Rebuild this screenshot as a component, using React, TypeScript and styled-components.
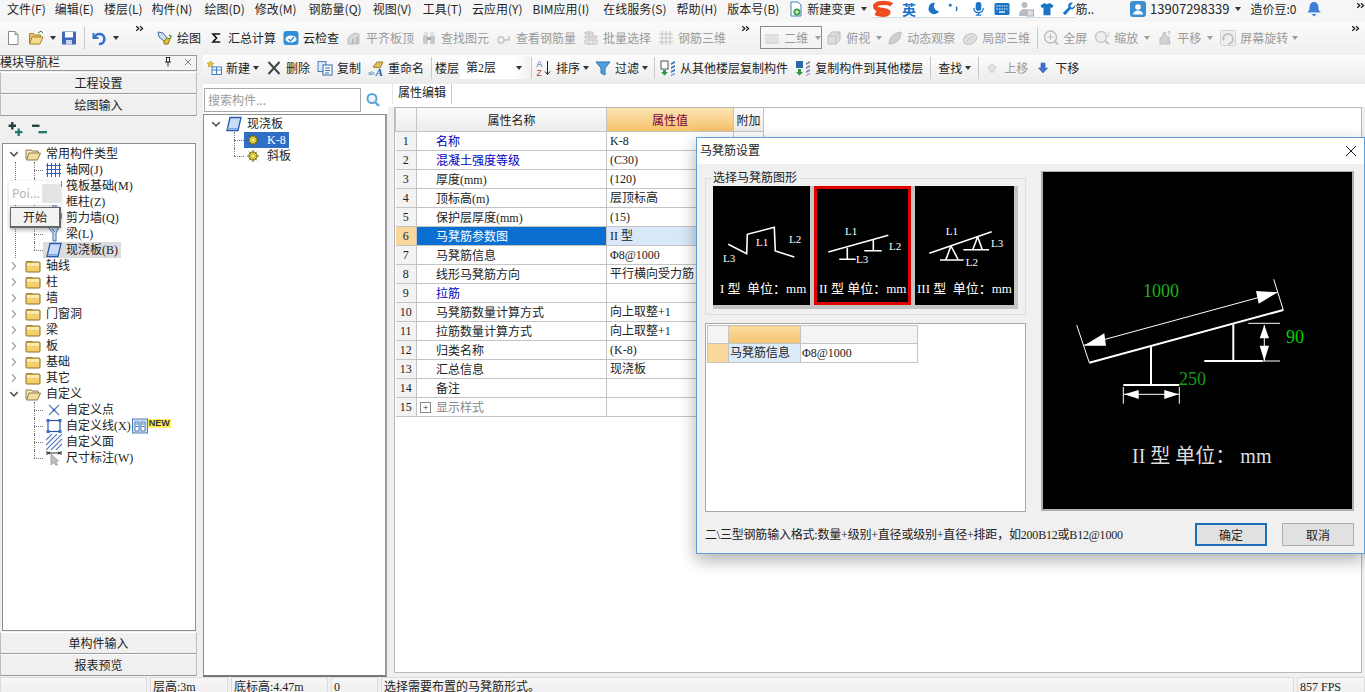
import React from "react";
import styled, { createGlobalStyle } from "styled-components";

const UI = `"Noto Sans CJK SC", "Noto Sans", sans-serif`;
const SONG = `"Liberation Serif", "Noto Sans CJK SC", serif`;

const Global = createGlobalStyle`
  html, body { margin: 0; padding: 0; width: 1365px; height: 692px; overflow: hidden; background: #f0f0f0; }
  #root { width: 1365px; height: 692px; }
  * { box-sizing: border-box; }
`;

const icons: Record<string, React.ReactNode> = {
  doc: <><path d="M3.5 1.5h6.5l3 3v10H3.5z" fill="#fff" stroke="#8a8a8a" /><path d="M10 1.5v3h3" fill="#ddd" stroke="#8a8a8a" /></>,
  open: <><path d="M1.5 13V3.5h4l1 1.5h6v2" fill="#e9c66a" stroke="#a5812c" /><path d="M4 7h11l-3 7H1.5z" fill="#f6dc8c" stroke="#a5812c" /><path d="M10 3l3-2 2 2" fill="none" stroke="#3a7a3a" /></>,
  save: <><rect x="1" y="1.5" width="14" height="13" rx="1" fill="#3f67b8" /><rect x="4" y="2" width="8" height="5.5" fill="#fff" /><rect x="5" y="10" width="6" height="4.5" fill="#c8d4ee" /></>,
  undo: <><path d="M2.5 3v5h5" fill="none" stroke="#2f6fd0" strokeWidth="2" /><path d="M3.5 8A5 5 0 1 1 8 14" fill="none" stroke="#2f6fd0" strokeWidth="2.6" /></>,
  paint: <><path d="M2 2l5 1 4 5-3 3-5-4z" fill="#cfe0f4" stroke="#4b6d96" /><path d="M8 11l3-3 3 1-2 5-4 0z" fill="#e7c031" stroke="#8b7b1e" /><path d="M13 5l2 1-1 3" fill="none" stroke="#55a04a" strokeWidth="1.4" /></>,
  sigma: <path d="M11.5 4.500V4H5l3.500 4L5 12h6.500v-.5" fill="none" stroke="#111" strokeWidth="1.600" />,
  cloud: <><rect x="0.5" y="1" width="15" height="14" rx="3" fill="#2e8fd8" /><ellipse cx="8" cy="9" rx="5.5" ry="3.6" fill="#fff" /><path d="M5.5 9l2 2 3.5-4" fill="none" stroke="#2e8fd8" strokeWidth="1.4" /></>,
  alignOff: <><path d="M2 14V8l6-5 5 1v10z" fill="#d8d8d8" stroke="#bcbcbc" /><path d="M6 14V9h2v5M10 14V7h2v7" fill="#bbb" /></>,
  binoOff: <><rect x="2" y="5" width="5" height="9" rx="1.5" fill="#c9c9c9" /><rect x="9" y="5" width="5" height="9" rx="1.5" fill="#c9c9c9" /><rect x="3.5" y="2" width="3" height="4" fill="#ddd" /><rect x="9.5" y="2" width="3" height="4" fill="#ddd" /><rect x="6" y="7" width="4" height="3" fill="#aaa" /></>,
  rebarOff: <><circle cx="5" cy="10" r="3" fill="none" stroke="#c4c4c4" strokeWidth="1.5" /><path d="M8 10h5V6" fill="none" stroke="#c4c4c4" strokeWidth="1.5" /></>,
  batchOff: <><path d="M2 2h8v2H2zM2 6h12v2H2zM2 10h12v4H2z" fill="#e8e8e8" stroke="#c2c2c2" /><path d="M6 1v14M10 4v10" stroke="#c2c2c2" strokeDasharray="1.5 1" /></>,
  gridOff: <path d="M1 4h14M1 8h14M1 12h14M4 1v14M8 1v14M12 1v14" stroke="#c4c4c4" fill="none" />,
  planeOff: <><rect x="1" y="4" width="14" height="10" fill="#dcdcdc" /><path d="M1 7h14M1 10h14" stroke="#ececec" /></>,
  cubeOff: <><path d="M2 6l4-4h8v8l-4 4H2z" fill="#dedede" stroke="#bdbdbd" /><path d="M2 6h8v8M10 6l4-4" fill="none" stroke="#bdbdbd" /></>,
  leafOff: <path d="M2 14c0-7 5-11 12-12 0 7-4 12-12 12z" fill="#cfcfcf" stroke="#bdbdbd" />,
  local3dOff: <><ellipse cx="8" cy="9" rx="7" ry="5" fill="#e0e0e0" stroke="#c2c2c2" transform="rotate(-25 8 9)" /><path d="M5 11l6-5" stroke="#bdbdbd" /></>,
  fullOff: <><circle cx="7.5" cy="7" r="6" fill="#f2f2f2" stroke="#bdbdbd" strokeWidth="1.4" /><path d="M7.5 4v6M4.5 7h6" stroke="#bdbdbd" /><path d="M12 11.5l3 3" stroke="#bdbdbd" strokeWidth="2" /></>,
  zoomOff: <><circle cx="7" cy="7" r="5.5" fill="#ededed" stroke="#c8c8c8" strokeWidth="1.4" /><path d="M11 11l4 3" stroke="#c4c4c4" strokeWidth="2" /><path d="M13 3h3M13 6h3" stroke="#ccc" /></>,
  panOff: <><path d="M3 14V8l3-1V3l2-1 1 4 3 1 1 7z" fill="#d2d2d2" stroke="#bdbdbd" /><path d="M12 1v4M10.5 2.5L12 1l1.5 1.5" fill="none" stroke="#c4c4c4" /></>,
  rotateOff: <><rect x="0.5" y="0.5" width="15" height="15" rx="1" fill="#efefef" stroke="#d2d2d2" /><path d="M3 9a5 5 0 1 1 5 5" fill="none" stroke="#c2c2c2" strokeWidth="2" /><path d="M1.5 8h4L3 11z" fill="#c2c2c2" /></>,
  add: <><path d="M4.5 1l1 2 2.2.2-1.6 1.5.5 2.3-2.1-1.2L2.4 7l.5-2.3L1.3 3.2 3.5 3z" fill="#f2c72f" stroke="#a8851a" strokeWidth=".6" /><rect x="6" y="7" width="9.5" height="7.5" fill="#fff" stroke="#3f7fc4" /><path d="M6 10h9.5M10.5 7v7.5" stroke="#3f7fc4" /></>,
  del: <path d="M2.5 2l11 12M13.5 2l-11 12" stroke="#444" strokeWidth="2" />,
  copy: <><rect x="1" y="1.5" width="8" height="10" fill="#dbe7f6" stroke="#4f7fb8" /><rect x="6" y="5" width="9" height="10" fill="#fff" stroke="#2f66a8" /><path d="M8 8h5M8 10.5h5M8 13h4" stroke="#2f66a8" /></>,
  rename: <><path d="M5 7l4-5h6l-3 6z" fill="#e1bd63" stroke="#9d8131" /><text x="0" y="15" fontSize="7" fontFamily="Liberation Serif" fill="#2c5f94">ab</text><text x="7.5" y="15.5" fontSize="11" fontWeight="700" fontStyle="italic" fontFamily="Liberation Serif" fill="#2b5fa8">A</text></>,
  sort: <><text x="0.5" y="7" fontSize="8.5" fontFamily="Liberation Sans" fill="#3e68b3">A</text><text x="0.5" y="15.5" fontSize="8.5" fontFamily="Liberation Sans" fill="#b23a3a">Z</text><path d="M11.5 1v13M9 11.5l2.5 3 2.5-3" fill="none" stroke="#222" /></>,
  filter: <path d="M1 2h14l-5 6v7l-4-2V8z" fill="#4da3e0" stroke="#2b72b0" />,
  fromFloor: <><rect x="1" y="1" width="7" height="8" fill="#fff" stroke="#555" /><path d="M3 10v2H1l3.500 3.500L8 12H6v-2z" fill="#2e9a3e" /><path d="M11 3l4-2v2l-4 2zM11 7l4-2v2l-4 2zM11 11l4-2v2l-4 2zM11 15l4-2v1l-4 2z" fill="#3f74b8" /></>,
  toFloor: <><rect x="1" y="1" width="7" height="7" fill="#2f66a8" /><path d="M3 9v3H1l3.500 3.500L8 12H6V9z" fill="#2e9a3e" /><path d="M11 3l4-2v2l-4 2zM11 7l4-2v2l-4 2zM11 11l4-2v2l-4 2zM11 15l4-2v1l-4 2z" fill="#7a8aa0" /></>,
  upOff: <path d="M8 3.500l4.500 4.500H10v4H6V8H3.500z" fill="#e2e2e2" stroke="#cfcfcf" />,
  down: <path d="M6 3h4v5h2.500L8 13 3.500 8H6z" fill="#3f6fd0" stroke="#2f58a8" strokeWidth=".6" />,
  fileNew: <><path d="M3 1h7l3 3v11H3z" fill="#fff" stroke="#3d7fc4" /><circle cx="9" cy="11" r="3.500" fill="#3fa03f" /><path d="M9 9v4M7 11h4" stroke="#fff" /></>,
  folder: <><path d="M1 4V3h6l1 1z" fill="#b8923a" /><rect x="1" y="4" width="14" height="10" rx="1" fill="#f3cf6e" stroke="#8b6f22" /><rect x="2" y="5" width="12" height="3" fill="#fbeab0" /></>,
  folderOpen: <><path d="M1 13V4h5l1 1h6v2" fill="#f6ebcb" stroke="#8b7a44" /><path d="M4 7h11.500l-3 7H1.500z" fill="#f4dc9c" stroke="#8b7a44" /></>,
  grid: <path d="M1.500 1v14M5.500 1v14M9.500 1v14M13.500 1v14M0 3.500h15M0 7.500h15M0 11.500h15" stroke="#2f5fc0" fill="none" />,
  raft: <><path d="M0 4h16v4H0z" fill="#c9d9f2" stroke="#2d5fb8" /><path d="M2 8v3M6 8v3M10 8v3M14 8v3" stroke="#2d5fb8" /></>,
  beam: <><path d="M2 1h11l-3 6v8H7V7z" fill="#cfe0f4" stroke="#3f6fb0" /><path d="M6 3l3 3" stroke="#3f6fb0" /></>,
  slab: <><path d="M4 1.500h11l-3 13H1z" fill="#c8dcf6" stroke="#2558ac" strokeWidth="1.300" /><path d="M1.500 12.500l10.500 0" stroke="#7ea6de" /></>,
  gear: <><circle cx="8" cy="8" r="4.800" fill="#f0d53c" stroke="#5d5a14" /><path d="M8 1v14M1 8h14M3 3l10 10M13 3L3 13" stroke="#5d5a14" strokeDasharray="1.500 1" /><circle cx="8" cy="8" r="2" fill="#fbeb7a" /></>,
  point: <><path d="M3 3l10 10M13 3L3 13" stroke="#5a83c0" strokeWidth="1.200" /><circle cx="8" cy="8" r="1.300" fill="#2f5fb0" /></>,
  lineBox: <><rect x="2" y="2.500" width="12" height="11" fill="none" stroke="#2558ac" strokeWidth="1.200" /><path d="M.5 1h3v3h-3zM12.500 1h3v3h-3zM.5 12h3v3h-3zM12.500 12h3v3h-3z" fill="#3c6fc4" /></>,
  hatch: <path d="M0 6L6 0M0 11L11 0M0 16L16 0M5 16L16 5M10 16l6-6" stroke="#4f78b8" strokeWidth="1.100" fill="none" />,
  dim: <><path d="M1 1v4M15 1v4M1 3h14" stroke="#333" /><path d="M1 3l3-1.500v3zM15 3l-3-1.500v3z" fill="#333" /><path d="M5 4v11l3-2.500 2 3 1.500-1-2-3 3-.5z" fill="#c0c0c0" stroke="#8a8a8a" strokeWidth=".7" /></>,
  book: <><rect x=".5" y="1" width="15" height="14" fill="#cfe0f4" stroke="#4f7fb8" /><path d="M3 4h4v9H3zM9 4h4v9H9z" fill="#fff" stroke="#4f7fb8" /><path d="M3.500 6h3M9.500 6h3M3.500 8.500h3M9.500 8.500h3" stroke="#4f7fb8" /></>,
  search: <><circle cx="7" cy="6.500" r="4.500" fill="#eaf4fb" stroke="#5ba6d8" strokeWidth="2" /><path d="M10.500 10.500L14 14" stroke="#5ba6d8" strokeWidth="2.400" /></>,
  plusTree: <><path d="M5 1v7M1.500 4.500h7" stroke="#1c3d3d" strokeWidth="2.200" /><path d="M11 7v7M7.500 10.500h7" stroke="#1f7a6a" strokeWidth="2.200" /></>,
  minusTree: <><path d="M1 4.500h7" stroke="#1c3d3d" strokeWidth="2.200" /><path d="M7 10.500h8" stroke="#1f7a6a" strokeWidth="2.200" /></>,
  chevRight: <path d="M5.500 3l4.500 5-4.500 5" fill="none" stroke="#a8a8a8" strokeWidth="1.800" />,
  chevDown: <path d="M3 5.500l5 5 5-5" fill="none" stroke="#555" strokeWidth="1.900" />,
  more: <path d="M3 3l3.500 3L3 9M8 3l3.500 3L8 9" fill="none" stroke="#111" strokeWidth="1.500" />,
  avatar: <><rect x="0" y="0" width="16" height="16" rx="3" fill="#3f8fd0" /><circle cx="8" cy="6" r="2.800" fill="#fff" /><path d="M3 13.500c.5-3 2.500-4 5-4s4.500 1 5 4z" fill="#fff" /></>,
  bell: <><path d="M8 1c3 0 4.500 2.500 4.500 6 0 2 1 3.500 2.500 4.500H1C2.500 10.500 3.500 9 3.500 7 3.500 3.500 5 1 8 1z" fill="#3e7fd8" /><path d="M5.500 13h5L8 15.500z" fill="#3e7fd8" /></>,
  moon: <path d="M10 1a7 7 0 1 0 5 10.500A6.500 6.500 0 0 1 10 1z" fill="#1a74c8" />,
  dots: <><circle cx="4" cy="4" r="1.800" fill="#1a74c8" /><path d="M11 6c1.500 1 1.500 3 0 5" fill="none" stroke="#1a74c8" strokeWidth="1.800" /></>,
  mic: <><rect x="5" y="1" width="6" height="9.500" rx="3" fill="#1a74c8" /><path d="M3 7.500c0 3 2 5 5 5s5-2 5-5M8 12.500V15M5 15h6" fill="none" stroke="#1a74c8" strokeWidth="1.300" /></>,
  keyboard: <><rect x=".5" y="2" width="15" height="12" rx="1.500" fill="#1a74c8" /><path d="M2.500 5h11M2.500 8h11" stroke="#fff" strokeDasharray="1.500 1" /><path d="M5 11h6" stroke="#fff" strokeWidth="1.300" /></>,
  person: <><circle cx="6.500" cy="4" r="3" fill="#b8bcc0" /><path d="M1 15c0-5 2-7 5.500-7S12 10 12 15z" fill="#b8bcc0" /><rect x="9" y="9" width="6.500" height="6" fill="#dde0e3" stroke="#a8acb0" /></>,
  shirt: <path d="M5 1l3 1.500L11 1l4.500 3-2 3-1.500-1v9H4V6L2.500 7l-2-3z" fill="#1a74c8" />,
  wrench: <path d="M15 3.500l-3 3-2-.5-.5-2 3-3c-2.500-1-5.500.5-5.500 3.500 0 .8.100 1.200.3 1.800L1 12.500 3.500 15l6.200-6.800c3 1 6-1.500 5.300-4.700z" fill="#1a74c8" />,
  pin: <path d="M5 2h6M6 2v6M10 2v6M4 8h8M8 8v6" stroke="#222" strokeWidth="1.300" fill="none" />,
  close: <path d="M3 3l10 10M13 3L3 13" stroke="#333" />,
};

const Svg = styled.svg<{ $ml?: number }>`
  flex: none;
  display: block;
  margin-left: ${(p) => p.$ml ?? 0}px;
`;

const Icon = ({ n, s = 16, ml }: { n: string; s?: number; ml?: number }) => (
  <Svg viewBox="0 0 16 16" width={s} height={s} $ml={ml}>{icons[n]}</Svg>
);

const Page = styled.div`
  position: relative;
  width: 1365px;
  height: 692px;
  overflow: hidden;
  display: flex;
  flex-direction: column;
  background: #f0f0f0;
  font: 12px/16px ${UI};
  color: #222;
`;

/* Menu */
const MenuBar = styled.div`
  height: 22px;
  flex: none;
  display: flex;
  align-items: flex-start;
  padding: 1px 0 0 7px;
  background: #f6f6f6;
`;
const MenuItem = styled.span<{ $ml?: number; $fs?: number }>`
  margin-left: ${(p) => p.$ml ?? 0}px;
  font-size: ${(p) => p.$fs ?? 12}px;
  white-space: nowrap;
  flex: none;
  color: #262626;
`;
const Caret = styled.i<{ $ml?: number; $off?: boolean }>`
  flex: none;
  display: block;
  width: 0;
  height: 0;
  margin-left: ${(p) => p.$ml ?? 6}px;
  border-left: 3px solid transparent;
  border-right: 3px solid transparent;
  border-top: 4px solid ${(p) => (p.$off ? "#9c9c9c" : "#333")};
`;
const MenuCaret = styled(Caret)`
  margin-top: 6px;
`;
const MenuIcon = styled.span<{ $ml?: number }>`
  flex: none;
  margin-left: ${(p) => p.$ml ?? 0}px;
`;

/* Sogou bar lies over the menu */
const Sogou = styled.div`
  position: absolute;
  left: 871px;
  top: 0;
  width: 205px;
  height: 18px;
  background: #fff;
  border-bottom: 1px solid #cfdde8;
  display: flex;
  align-items: center;
  color: #1a74c8;
`;
const SogouGlyph = styled.span`
  margin-left: 6px;
  font-size: 14px;
  font-weight: 700;
`;
const SogouIcons = styled.div`
  display: flex;
  align-items: center;
  gap: 7px;
  margin-left: 9px;
`;

/* Toolbars */
const MainBar = styled.div`
  height: 33px;
  flex: none;
  display: flex;
  align-items: center;
  padding: 2px 0 4px 5px;
  background: linear-gradient(#fbfbfb, #efefef);
`;
const Tool = styled.div<{ $ml?: number; $off?: boolean; $gap?: number }>`
  flex: none;
  display: flex;
  align-items: center;
  gap: ${(p) => p.$gap ?? 4}px;
  margin-left: ${(p) => p.$ml ?? 7}px;
  color: ${(p) => (p.$off ? "#9a9a9a" : "#222")};
  white-space: nowrap;
`;
const Sep = styled.i<{ $ml?: number }>`
  flex: none;
  display: block;
  width: 1px;
  height: 22px;
  margin-left: ${(p) => p.$ml ?? 7}px;
  background: #c8c8c8;
`;
const More = styled.div<{ $ml?: number }>`
  flex: none;
  width: 12px;
  margin-left: ${(p) => p.$ml ?? 14}px;
  align-self: flex-start;
`;
const ViewCombo = styled.div`
  flex: none;
  margin-left: 8px;
  width: 62px;
  height: 23px;
  border: 1px solid #8c8c8c;
  display: flex;
  align-items: center;
  gap: 4px;
  padding-left: 3px;
  color: #9a9a9a;
`;

const Body = styled.div`
  flex: 1;
  display: flex;
  min-height: 0;
`;

/* Left nav */
const Nav = styled.div`
  width: 197px;
  flex: none;
  display: flex;
  flex-direction: column;
`;
const NavHead = styled.div`
  height: 16px;
  flex: none;
  display: flex;
  align-items: center;
  padding: 0 3px 2px 0;
  border: 1px solid #9a9a9a;
  border-left: 0;
  margin-bottom: 1px;
  line-height: 14px;
  background: #f4f4f4;
`;
const NavHeadTitle = styled.span`
  flex: 1;
`;
const NavBtn = styled.div`
  height: 22px;
  flex: none;
  text-align: center;
  line-height: 22px;
  background: #f0f0f0;
  border: 1px solid #bdbdbd;
  border-top-color: #fff;
  border-bottom-color: #9c9c9c;
  font-family: ${SONG};
`;
const TreeTools = styled.div`
  height: 27px;
  flex: none;
  display: flex;
  align-items: center;
  gap: 7px;
  padding-left: 7px;
`;
const TreeBox = styled.div`
  height: 488px;
  flex: none;
  margin: 0 1px 1px 2px;
  padding-top: 2px;
  background: #fff;
  border: 1px solid #8e8e8e;
  font-family: ${SONG};
  overflow: hidden;
`;
const Row = styled.div<{ $pl: number }>`
  position: relative;
  height: 16px;
  display: flex;
  align-items: center;
  padding-left: ${(p) => p.$pl}px;
  white-space: nowrap;
`;
const Chevron = styled.span`
  flex: none;
  width: 10px;
  height: 16px;
  display: flex;
  align-items: center;
  justify-content: center;
`;
const RootLabel = styled.span`
  margin-left: 5px;
`;
const Children = styled.div<{ $trunk?: boolean }>`
  position: relative;
  &::before {
    content: "";
    display: ${(p) => (p.$trunk ? "block" : "none")};
    position: absolute;
    left: 12px;
    top: 0;
    bottom: 0;
    border-left: 1px dotted #777;
  }
`;
const Child = styled.div<{ $sel?: boolean }>`
  position: relative;
  height: 16px;
  display: flex;
  align-items: center;
  padding-left: 40px;
  white-space: nowrap;
  &::before {
    content: "";
    position: absolute;
    left: 31px;
    top: 8px;
    width: 9px;
    border-top: 1px dotted #777;
  }
  &::after {
    content: "";
    position: absolute;
    left: 31px;
    top: 0;
    height: 16px;
    border-left: 1px dotted #777;
  }
  &:last-child::after {
    height: 8px;
  }
`;
const ChildInner = styled.span<{ $sel?: boolean }>`
  display: flex;
  align-items: center;
  gap: 4px;
  height: 16px;
  padding: 0 3px;
  background: ${(p) => (p.$sel ? "#dcdcdc" : "transparent")};
`;
const NewBadge = styled.span`
  margin: -6px 0 0 -4px;
  padding: 0 1px;
  background: #fdec5c;
  color: #333;
  font: 700 9px/9px "Liberation Sans", sans-serif;
`;

/* Overlay popup */
const Popup = styled.div`
  position: absolute;
  left: 9px;
  top: 181px;
  width: 52px;
  height: 24px;
  background: rgba(255, 255, 255, 0.92);
  box-shadow: 0 1px 4px rgba(0, 0, 0, 0.18);
  display: flex;
  align-items: center;
  padding-left: 3px;
  color: #b4b4b4;
`;
const PopupBox = styled.i`
  display: block;
  width: 19px;
  height: 19px;
  margin-left: auto;
  background: #e4e4e4;
`;
const PopupBtn = styled.div`
  position: absolute;
  left: 10px;
  top: 207px;
  width: 51px;
  height: 21px;
  background: #f2f2f2;
  border: 1px solid #666;
  border-right-width: 2px;
  border-bottom-width: 2px;
  box-shadow: 0 2px 4px rgba(0, 0, 0, 0.3);
  text-align: center;
  line-height: 17px;
`;

/* Right column */
const Work = styled.div`
  flex: 1;
  min-width: 0;
  display: flex;
  flex-direction: column;
  padding-left: 6px;
`;
const SubBar = styled.div`
  height: 29px;
  flex: none;
  display: flex;
  align-items: center;
  padding: 0 0 4px 3px;
  background: linear-gradient(#fdfdfd, #ebebeb);
`;
const FloorCombo = styled.div`
  flex: none;
  margin-left: 1px;
  width: 70px;
  height: 23px;
  display: flex;
  align-items: center;
  padding-left: 6px;
  background: linear-gradient(90deg, #fff 80%, #f0f0f0);
  font-family: ${SONG};
`;
const FloorCaret = styled(Caret)`
  margin-left: auto;
  margin-right: 8px;
`;
const Split = styled.div`
  flex: 1;
  display: flex;
  min-height: 0;
`;
const Middle = styled.div`
  width: 185px;
  flex: none;
  display: flex;
  flex-direction: column;
  background: #f0f0f0;
`;
const SearchRow = styled.div`
  height: 30px;
  flex: none;
  display: flex;
  align-items: center;
  padding: 4px 0 2px 1px;
  background: #fff;
`;
const SearchInput = styled.div`
  width: 157px;
  height: 24px;
  padding-left: 3px;
  border: 1px solid #a8a8a8;
  line-height: 21px;
  color: #999;
`;
const SearchBtn = styled.div`
  margin-left: 4px;
`;
const MidTree = styled.div`
  height: 563px;
  flex: none;
  width: 184px;
  padding-top: 1px;
  background: #fff;
  border: 1px solid #8e8e8e;
  border-right: 2px solid #9a9a9a;
  border-bottom: 2px solid #777;
  font-family: ${SONG};
`;
const MidChild = styled.div`
  position: relative;
  height: 16px;
  display: flex;
  align-items: center;
  padding-left: 40px;
  &::before {
    content: "";
    position: absolute;
    left: 30px;
    top: 8px;
    width: 10px;
    border-top: 1px dotted #777;
  }
  &::after {
    content: "";
    position: absolute;
    left: 30px;
    top: 0;
    height: 16px;
    border-left: 1px dotted #777;
  }
  &:last-child::after {
    height: 8px;
  }
`;
const MidChildInner = styled.span<{ $sel?: boolean }>`
  display: flex;
  align-items: center;
  gap: 7px;
  width: 45px;
  height: 16px;
  padding-left: 2px;
  white-space: nowrap;
  background: ${(p) => (p.$sel ? "#2f6dc8" : "transparent")};
  color: ${(p) => (p.$sel ? "#fff" : "#222")};
`;

const Props = styled.div`
  flex: 1;
  min-width: 0;
  display: flex;
  flex-direction: column;
`;
const Tabs = styled.div`
  height: 23px;
  flex: none;
  background: #fff;
  padding-left: 4px;
`;
const Tab = styled.div`
  width: 60px;
  height: 20px;
  border-right: 1px solid #c8c8c8;
  border-left: 1px solid #e4e4e4;
  text-align: center;
  line-height: 18px;
  font-family: ${SONG};
`;
const PropsPanel = styled.div`
  height: 566px;
  flex: none;
  margin: 0 3px 0 6px;
  background: #fff;
  border: 1px solid #b8b8b8;
  overflow: hidden;
`;
const PTable = styled.table`
  width: 368px;
  table-layout: fixed;
  border-collapse: collapse;
  font-family: ${SONG};
`;
const HeadCell = styled.th<{ $hot?: boolean }>`
  height: 23px;
  padding: 3px 0 0;
  font-weight: 400;
  line-height: 14px;
  border: 1px solid #c4c4c4;
  border-top: 0;
  color: ${(p) => (p.$hot ? "#800040" : "#222")};
  background: ${(p) =>
    p.$hot ? "linear-gradient(#fbe3b3, #f5c169)" : "linear-gradient(#fbfbfb, #ececec)"};
`;
const NumCell = styled.td<{ $hot?: boolean }>`
  height: 19px;
  padding: 0;
  line-height: 14px;
  text-align: center;
  border: 1px solid #c4c4c4;
  border-left: 0;
  background: ${(p) => (p.$hot ? "#fad79d" : "#f3f3f3")};
`;
const NameCell = styled.td<{ $blue?: boolean; $sel?: boolean; $off?: boolean }>`
  height: 19px;
  padding: 2px 0 0 19px;
  line-height: 14px;
  border: 1px solid #c4c4c4;
  white-space: nowrap;
  background: ${(p) => (p.$sel ? "#0a6fd0" : "#fff")};
  color: ${(p) => (p.$sel ? "#fff" : p.$blue ? "#0000c0" : p.$off ? "#888" : "#222")};
`;
const NameWrap = styled.span`
  display: flex;
  align-items: center;
  gap: 5px;
  margin-left: -16px;
`;
const PlusBox = styled.i`
  display: flex;
  align-items: center;
  justify-content: center;
  width: 11px;
  height: 11px;
  border: 1px solid #888;
  font-style: normal;
  font-size: 10px;
  line-height: 9px;
  color: #333;
`;
const ValCell = styled.td<{ $sel?: boolean }>`
  height: 19px;
  padding: 0 0 0 3px;
  line-height: 14px;
  border: 1px solid #c4c4c4;
  white-space: nowrap;
  overflow: hidden;
  background: ${(p) => (p.$sel ? "#d8e8f8" : "#fff")};
`;
const ExtraCell = styled.td`
  height: 19px;
  padding: 0;
  border: 1px solid #c4c4c4;
`;

/* Status bar */
const Status = styled.div`
  height: 15px;
  flex: none;
  display: flex;
  gap: 3px;
  font-family: ${SONG};
  background: #f0f0f0;
  overflow: hidden;
`;
const StatusCell = styled.div<{ $w?: number }>`
  ${(p) => (p.$w ? `width: ${p.$w}px; flex: none;` : "flex: 1;")}
  height: 20px;
  padding: 1px 0 0 2px;
  background: linear-gradient(#f6f6f6, #efefef);
  border: 1px solid #dcdcdc;
  white-space: nowrap;
`;

/* Dialog */
const Dialog = styled.div`
  position: absolute;
  left: 696px;
  top: 137px;
  width: 669px;
  height: 417px;
  display: flex;
  flex-direction: column;
  background: #f0f0f0;
  border: 1px solid #5e9fd6;
  box-shadow: 0 6px 16px rgba(0, 0, 0, 0.32);
  font-family: ${SONG};
`;
const DialogTitle = styled.div`
  height: 26px;
  flex: none;
  display: flex;
  align-items: center;
  justify-content: space-between;
  padding: 0 7px 0 3px;
  background: #fff;
`;
const DialogBody = styled.div`
  flex: 1;
  min-height: 0;
  display: flex;
  gap: 15px;
  padding: 7px 10px 0 8px;
`;
const LeftCol = styled.div`
  width: 321px;
  flex: none;
  display: flex;
  flex-direction: column;
  gap: 8px;
  padding-top: 7px;
`;
const Group = styled.div`
  position: relative;
  height: 137px;
  flex: none;
  padding: 7px 0 0 7px;
  border: 1px solid #dcdcdc;
`;
const Legend = styled.span`
  position: absolute;
  left: 7px;
  top: -9px;
  padding-right: 3px;
  background: #f0f0f0;
`;
const Strip = styled.div`
  width: 305px;
  height: 123px;
  display: flex;
  gap: 4px;
  background: #c4c4c4;
`;
const Thumb = styled.div<{ $w: number; $sel?: boolean }>`
  flex: none;
  width: ${(p) => p.$w}px;
  height: 119px;
  background: #000;
  outline: ${(p) => (p.$sel ? "3px solid #e00000" : "none")};
  outline-offset: -3px;
`;
const ThumbSvg = styled.svg`
  display: block;
  width: 100%;
  height: 100%;
`;
const InfoBox = styled.div`
  height: 189px;
  flex: none;
  padding: 1px;
  background: #fff;
  border: 1px solid #a8a8a8;
`;
const ITable = styled.table`
  width: 210px;
  table-layout: fixed;
  border-collapse: collapse;
`;
const ICell = styled.td<{ $bg: string; $h: number }>`
  height: ${(p) => p.$h}px;
  padding: 0 0 0 1px;
  background: ${(p) => p.$bg};
  border: 1px solid #c4c4c4;
  white-space: nowrap;
`;
const BigPic = styled.div`
  width: 313px;
  height: 340px;
  flex: none;
  background: #000;
  border: 2px solid #b0b0b0;
  border-top-width: 1px;
`;
const Foot = styled.div`
  height: 23px;
  flex: none;
  margin: 0 10px 7px 8px;
  display: flex;
  align-items: center;
`;
const FootNote = styled.span`
  flex: 1;
  white-space: nowrap;
  letter-spacing: -0.2px;
`;
const DlgBtn = styled.div<{ $primary?: boolean }>`
  width: 72px;
  height: 23px;
  margin-left: ${(p) => (p.$primary ? 0 : 15)}px;
  text-align: center;
  line-height: ${(p) => (p.$primary ? 19 : 21)}px;
  background: #e1e1e1;
  border: ${(p) => (p.$primary ? "2px solid #1c6fb8" : "1px solid #adadad")};
  font-family: ${UI};
`;

const Tx = ({ x, y, s = 11, f = "#fff", children }: { x: number; y: number; s?: number; f?: string; children: React.ReactNode }) => (
  <text x={x} y={y} fontSize={s} fill={f} fontFamily={SONG}>{children}</text>
);

const rows: [string, string, ("blue" | "sel" | "off")?][] = [
  ["名称", "K-8", "blue"],
  ["混凝土强度等级", "(C30)", "blue"],
  ["厚度(mm)", "(120)"],
  ["顶标高(m)", "层顶标高"],
  ["保护层厚度(mm)", "(15)"],
  ["马凳筋参数图", "II 型", "sel"],
  ["马凳筋信息", "Φ8@1000"],
  ["线形马凳筋方向", "平行横向受力筋"],
  ["拉筋", "", "blue"],
  ["马凳筋数量计算方式", "向上取整+1"],
  ["拉筋数量计算方式", "向上取整+1"],
  ["归类名称", "(K-8)"],
  ["汇总信息", "现浇板"],
  ["备注", ""],
  ["显示样式", "", "off"],
];

const common = [
  ["grid", "轴网(J)"],
  ["raft", "筏板基础(M)"],
  ["beam", "框柱(Z)"],
  ["raft", "剪力墙(Q)"],
  ["beam", "梁(L)"],
  ["slab", "现浇板(B)"],
];
const folders = ["轴线", "柱", "墙", "门窗洞", "梁", "板", "基础", "其它"];

export default function App() {
  return (
    <Page>
      <Global />
      <MenuBar>
        <MenuItem>文件(F)</MenuItem>
        <MenuItem $ml={9}>编辑(E)</MenuItem>
        <MenuItem $ml={10}>楼层(L)</MenuItem>
        <MenuItem $ml={9}>构件(N)</MenuItem>
        <MenuItem $ml={12}>绘图(D)</MenuItem>
        <MenuItem $ml={10}>修改(M)</MenuItem>
        <MenuItem $ml={12}>钢筋量(Q)</MenuItem>
        <MenuItem $ml={11}>视图(V)</MenuItem>
        <MenuItem $ml={11}>工具(T)</MenuItem>
        <MenuItem $ml={10}>云应用(Y)</MenuItem>
        <MenuItem $ml={10}>BIM应用(I)</MenuItem>
        <MenuItem $ml={14}>在线服务(S)</MenuItem>
        <MenuItem $ml={10}>帮助(H)</MenuItem>
        <MenuItem $ml={10}>版本号(B)</MenuItem>
        <MenuIcon $ml={9}><Icon n="fileNew" /></MenuIcon>
        <MenuItem $ml={3}>新建变更</MenuItem>
        <MenuCaret $ml={6} />
        <MenuItem $ml={208}>筋..</MenuItem>
        <MenuIcon $ml={36}><Icon n="avatar" /></MenuIcon>
        <MenuItem $ml={4} $fs={13}>13907298339</MenuItem>
        <MenuCaret $ml={6} />
        <MenuItem $ml={9}>造价豆:0</MenuItem>
        <MenuIcon $ml={10}><Icon n="bell" /></MenuIcon>
        <More $ml={33}><Icon n="more" s={12} /></More>
      </MenuBar>
      <Sogou>
        <svg viewBox="0 0 28 18" width="27" height="18">
          <path d="M23 4.500C20 1.500 8 1 5 5c-2 3.500 4 5 9 5.500 5 .5 7 2 4 4-3 1.500-9 1-13-1" fill="none" stroke="#ee4b1e" strokeWidth="5" />
        </svg>
        <SogouGlyph>英</SogouGlyph>
        <SogouIcons>
          <Icon n="moon" s={13} ml={2} />
          <Icon n="dots" s={13} />
          <Icon n="mic" s={15} ml={4} />
          <Icon n="keyboard" s={16} ml={1} />
          <Icon n="person" s={16} ml={1} />
          <Icon n="shirt" s={14} ml={-1} />
          <Icon n="wrench" s={14} ml={1} />
        </SogouIcons>
      </Sogou>

      <MainBar>
        <Icon n="doc" />
        <Icon n="open" ml={7} />
        <Caret />
        <Icon n="save" ml={5} />
        <Sep />
        <Icon n="undo" ml={6} />
        <Caret />
        <More $ml={15}><Icon n="more" s={12} /></More>
        <Tool $ml={10} $gap={5}><Icon n="paint" />绘图</Tool>
        <Tool><Icon n="sigma" />汇总计算</Tool>
        <Tool><Icon n="cloud" />云检查</Tool>
        <Tool $off><Icon n="alignOff" />平齐板顶</Tool>
        <Tool $off><Icon n="binoOff" />查找图元</Tool>
        <Tool $off><Icon n="rebarOff" />查看钢筋量</Tool>
        <Tool $off><Icon n="batchOff" />批量选择</Tool>
        <Tool $off><Icon n="gridOff" />钢筋三维</Tool>
        <More><Icon n="more" s={12} /></More>
        <ViewCombo><Icon n="planeOff" />二维<Caret $ml={3} $off /></ViewCombo>
        <Tool $ml={4} $off><Icon n="cubeOff" />俯视</Tool>
        <Caret $off />
        <Tool $ml={5} $off><Icon n="leafOff" />动态观察</Tool>
        <Tool $off><Icon n="local3dOff" />局部三维</Tool>
        <Sep />
        <Tool $ml={5} $off><Icon n="fullOff" />全屏</Tool>
        <Tool $off><Icon n="zoomOff" />缩放</Tool>
        <Caret $off />
        <Tool $off><Icon n="panOff" />平移</Tool>
        <Caret $off />
        <Tool $off><Icon n="rotateOff" />屏幕旋转</Tool>
        <Caret $ml={4} $off />
        <More $ml={52}><Icon n="more" s={12} /></More>
      </MainBar>

      <Body>
        <Nav>
          <NavHead>
            <NavHeadTitle>模块导航栏</NavHeadTitle>
            <Icon n="pin" s={12} />
            <Icon n="close" s={10} ml={9} />
          </NavHead>
          <NavBtn>工程设置</NavBtn>
          <NavBtn>绘图输入</NavBtn>
          <TreeTools><Icon n="plusTree" s={17} /><Icon n="minusTree" s={17} /></TreeTools>
          <TreeBox>
            <Row $pl={6}>
              <Chevron><Icon n="chevDown" s={12} /></Chevron>
              <Icon n="folderOpen" ml={6} />
              <RootLabel>常用构件类型</RootLabel>
            </Row>
            <Children $trunk>
              {common.map(([ic, label], i) => (
                <Child key={label}>
                  <ChildInner $sel={i === 5}><Icon n={ic} />{label}</ChildInner>
                </Child>
              ))}
            </Children>
            {folders.map((f) => (
              <Row $pl={6} key={f}>
                <Chevron><Icon n="chevRight" s={12} /></Chevron>
                <Icon n="folder" ml={6} />
                <RootLabel>{f}</RootLabel>
              </Row>
            ))}
            <Row $pl={6}>
              <Chevron><Icon n="chevDown" s={12} /></Chevron>
              <Icon n="folderOpen" ml={6} />
              <RootLabel>自定义</RootLabel>
            </Row>
            <Children>
              <Child><ChildInner><Icon n="point" />自定义点</ChildInner></Child>
              <Child>
                <ChildInner><Icon n="lineBox" />自定义线(X)<Icon n="book" ml={-3} /><NewBadge>NEW</NewBadge></ChildInner>
              </Child>
              <Child><ChildInner><Icon n="hatch" />自定义面</ChildInner></Child>
              <Child><ChildInner><Icon n="dim" />尺寸标注(W)</ChildInner></Child>
            </Children>
          </TreeBox>
          <NavBtn>单构件输入</NavBtn>
          <NavBtn>报表预览</NavBtn>
        </Nav>

        <Work>
          <SubBar>
            <Tool $ml={0}><Icon n="add" />新建</Tool>
            <Caret $ml={3} />
            <Tool $ml={7}><Icon n="del" />删除</Tool>
            <Tool><Icon n="copy" />复制</Tool>
            <Tool><Icon n="rename" />重命名</Tool>
            <Sep />
            <Tool $ml={3}>楼层</Tool>
            <FloorCombo>第2层<FloorCaret /></FloorCombo>
            <Sep $ml={1} />
            <Tool $ml={4}><Icon n="sort" />排序</Tool>
            <Caret $ml={3} />
            <Tool $ml={6}><Icon n="filter" />过滤</Tool>
            <Caret $ml={3} />
            <Sep $ml={6} />
            <Tool $ml={5}><Icon n="fromFloor" />从其他楼层复制构件</Tool>
            <Tool><Icon n="toFloor" />复制构件到其他楼层</Tool>
            <Sep />
            <Tool>查找</Tool>
            <Caret $ml={3} />
            <Sep />
            <Tool $ml={5} $off><Icon n="upOff" />上移</Tool>
            <Tool><Icon n="down" />下移</Tool>
          </SubBar>
          <Split>
            <Middle>
              <SearchRow>
                <SearchInput>搜索构件...</SearchInput>
                <SearchBtn><Icon n="search" /></SearchBtn>
              </SearchRow>
              <MidTree>
                <Row $pl={7}>
                  <Chevron><Icon n="chevDown" s={12} /></Chevron>
                  <Icon n="slab" ml={5} />
                  <RootLabel>现浇板</RootLabel>
                </Row>
                <div>
                  <MidChild><MidChildInner $sel><Icon n="gear" s={14} />K-8</MidChildInner></MidChild>
                  <MidChild><MidChildInner><Icon n="gear" s={14} />斜板</MidChildInner></MidChild>
                </div>
              </MidTree>
            </Middle>
            <Props>
              <Tabs><Tab>属性编辑</Tab></Tabs>
              <PropsPanel>
                <PTable>
                  <colgroup>
                    <col width={21} /><col width={190} /><col width={127} /><col width={30} />
                  </colgroup>
                  <thead>
                    <tr>
                      <HeadCell />
                      <HeadCell>属性名称</HeadCell>
                      <HeadCell $hot>属性值</HeadCell>
                      <HeadCell>附加</HeadCell>
                    </tr>
                  </thead>
                  <tbody>
                    {rows.map(([name, val, kind], i) => (
                      <tr key={name}>
                        <NumCell $hot={kind === "sel"}>{i + 1}</NumCell>
                        <NameCell $blue={kind === "blue"} $sel={kind === "sel"} $off={kind === "off"}>
                          {i === 14 ? <NameWrap><PlusBox>+</PlusBox>{name}</NameWrap> : name}
                        </NameCell>
                        <ValCell $sel={kind === "sel"}>{val}</ValCell>
                        <ExtraCell />
                      </tr>
                    ))}
                  </tbody>
                </PTable>
              </PropsPanel>
            </Props>
          </Split>
        </Work>
      </Body>

      <Status>
        <StatusCell $w={147} />
        <StatusCell $w={78}>层高:3m</StatusCell>
        <StatusCell $w={97}>底标高:4.47m</StatusCell>
        <StatusCell $w={47}>0</StatusCell>
        <StatusCell>选择需要布置的马凳筋形式。</StatusCell>
        <StatusCell $w={68}>857 FPS</StatusCell>
      </Status>

      <Popup>Poi...<PopupBox /></Popup>
      <PopupBtn>开始</PopupBtn>

      <Dialog>
        <DialogTitle>
          马凳筋设置
          <svg width="12" height="12" viewBox="0 0 12 12"><path d="M1 1l10 10M11 1L1 11" stroke="#222" /></svg>
        </DialogTitle>
        <DialogBody>
          <LeftCol>
            <Group>
              <Legend>选择马凳筋图形</Legend>
              <Strip>
                <Thumb $w={97}>
                  <ThumbSvg viewBox="713 185 97 119">
                    <path d="M728.300 243.300l18.400 9.400.6-19.400 27-7 1 23.700 19 6" fill="none" stroke="#fff" strokeWidth="1.600" />
                    <Tx x={723} y={261}>L3</Tx><Tx x={756} y={245}>L1</Tx><Tx x={789} y={242}>L2</Tx>
                    <Tx x={720} y={292} s={13}>{"I 型\u00a0\u00a0单位：mm"}</Tx>
                  </ThumbSvg>
                </Thumb>
                <Thumb $w={97} $sel>
                  <ThumbSvg viewBox="814 185 97 119">
                    <path d="M828.300 251l60-16.700M847.300 247v11.300M839.300 258.300h16.400M873.300 239v10.700M864.300 249.700h17.400" fill="none" stroke="#fff" strokeWidth="1.600" />
                    <Tx x={845} y={234}>L1</Tx><Tx x={889} y={249}>L2</Tx><Tx x={856} y={262}>L3</Tx>
                    <Tx x={819} y={292} s={13}>{"II 型\u00a0单位：mm"}</Tx>
                  </ThumbSvg>
                </Thumb>
                <Thumb $w={99}>
                  <ThumbSvg viewBox="915 185 99 119">
                    <path d="M929.300 252.300l62.400-21.600M951 245l-5.300 14M951 245l7.300 14M940 259h23.700M977.700 235.700l-5 13M977.700 235.700l4.600 13M963.300 248.700H989" fill="none" stroke="#fff" strokeWidth="1.600" />
                    <Tx x={945.700} y={234}>L1</Tx><Tx x={965.700} y={265}>L2</Tx><Tx x={991} y={246}>L3</Tx>
                    <Tx x={917} y={292} s={13}>{"III 型\u00a0\u00a0单位：mm"}</Tx>
                  </ThumbSvg>
                </Thumb>
              </Strip>
            </Group>
            <InfoBox>
              <ITable>
                <colgroup><col width={21} /><col width={72} /><col width={117} /></colgroup>
                <tbody>
                  <tr>
                    <ICell $h={18} $bg="#f4f4f4" />
                    <ICell $h={18} $bg="linear-gradient(#fbdc9e,#f5c570)" />
                    <ICell $h={18} $bg="#f4f4f4" />
                  </tr>
                  <tr>
                    <ICell $h={19} $bg="#fad79d" />
                    <ICell $h={19} $bg="#dcebf9">马凳筋信息</ICell>
                    <ICell $h={19} $bg="#fff">Φ8@1000</ICell>
                  </tr>
                </tbody>
              </ITable>
            </InfoBox>
          </LeftCol>
          <BigPic>
            <ThumbSvg viewBox="1042 172 309 337">
              <g stroke="#fff" fill="none">
                <path d="M1088.300 362.700L1282.300 310" strokeWidth="2" />
                <path d="M1075.700 325l12.600 37.700M1272.700 279.300l9.600 30.700M1083.300 345l193.400-52.700" />
                <path d="M1150 346.700V385M1232.300 324.300V361" strokeWidth="2" />
                <path d="M1122.300 385h56M1203.300 361h58.400" strokeWidth="2" />
                <path d="M1261.700 361H1279M1247.300 323.300H1279M1263.300 325v36M1122.300 387v16.700M1178.300 387v16.700M1123 394.300h55" />
              </g>
              <g fill="#fff">
                <path d="M1082.700 345.700l20.600-12.400 1.700 12.400zM1276.700 292.300l-21.700-1.300 2.700 12.700z" />
                <path d="M1263.300 325l-4.600 13.300h9.300zM1263.300 361l-4.600-15.300h9.300z" />
                <path d="M1123.300 394.300l14.400-4.300v9zM1177.700 394.300l-14.400-4.300v9z" />
              </g>
              <Tx x={1142} y={297} s={18} f="#1eb41e">1000</Tx>
              <Tx x={1285} y={343} s={18} f="#00d000">90</Tx>
              <Tx x={1178} y={385} s={18} f="#1a9c1a">250</Tx>
              <Tx x={1131} y={463} s={20} f="#dddddd">II 型 单位： mm</Tx>
            </ThumbSvg>
          </BigPic>
        </DialogBody>
        <Foot>
          <FootNote>二\三型钢筋输入格式:数量+级别+直径或级别+直径+排距，如200B12或B12@1000</FootNote>
          <DlgBtn $primary>确定</DlgBtn>
          <DlgBtn>取消</DlgBtn>
        </Foot>
      </Dialog>
    </Page>
  );
}
